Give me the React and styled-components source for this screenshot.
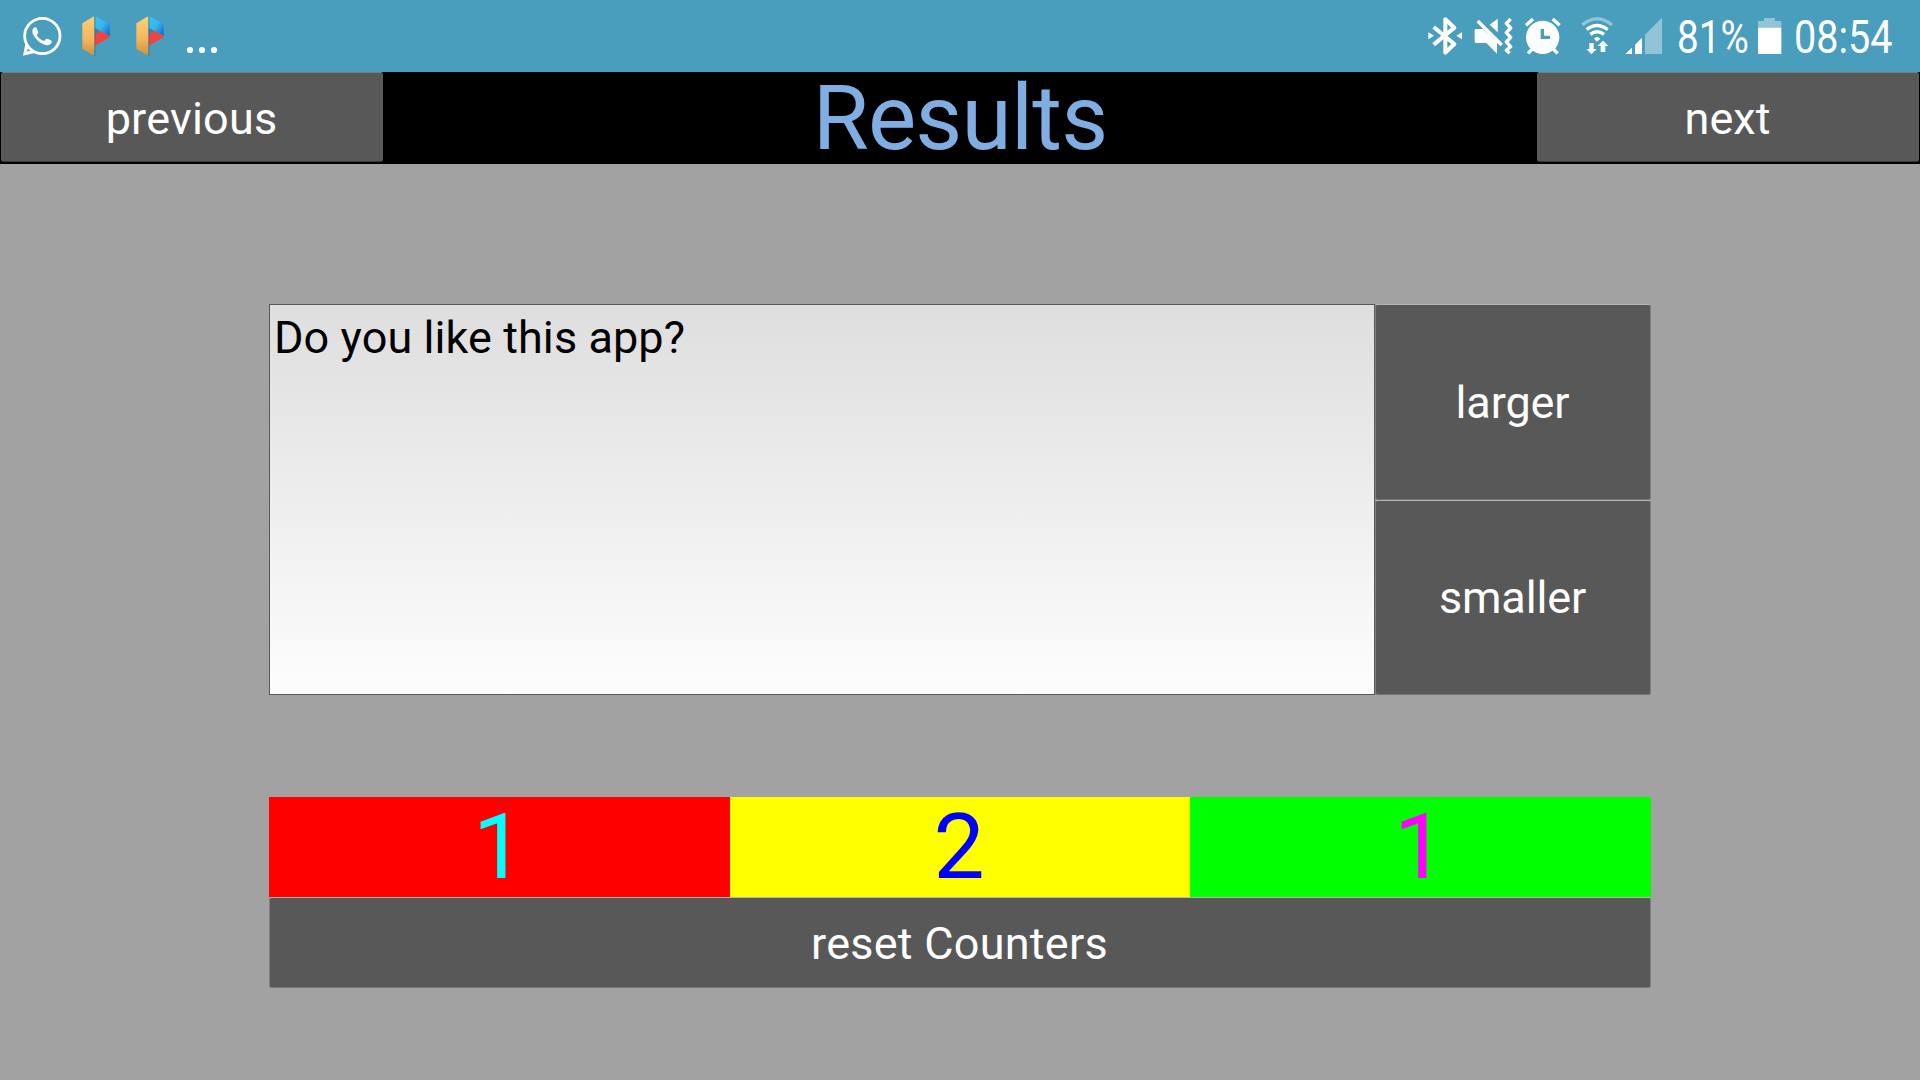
import React from "react";
import styled, { createGlobalStyle } from "styled-components";

const GlobalStyle = createGlobalStyle`
  * { box-sizing: border-box; }
  html, body { margin: 0; padding: 0; }
  body { background: #a2a2a2; font-family: Roboto, "Noto Sans", sans-serif; overflow: hidden; }
`;

const Screen = styled.div`
  width: 1920px;
  height: 1080px;
  display: flex;
  flex-direction: column;
  background: #a2a2a2;
`;

const StatusBar = styled.header`
  height: 72px;
  flex: none;
  display: flex;
  justify-content: space-between;
  padding: 0 24px 0 22px;
  background: #499dbd;
  color: #fff;
`;

const StatusGroup = styled.div`
  display: flex;
  align-items: flex-start;
`;

const Glyph = styled.svg`
  display: block;
  flex: none;
  width: ${(p) => p.$w}px;
  height: 72px;
  fill: #fff;
`;

const StatusText = styled.div`
  width: ${(p) => p.$w}px;
  height: 72px;
  flex: none;
  font-size: 45.5px;
  line-height: 75px;
  white-space: nowrap;
  span {
    display: inline-block;
    transform: scaleX(${(p) => p.$squeeze});
    transform-origin: 0 50%;
  }
`;

const TitleBar = styled.div`
  height: 92px;
  flex: none;
  display: flex;
  justify-content: space-between;
  padding: 0 1px 2px;
  background: #000;
`;

const Title = styled.h1`
  margin: 0;
  font-size: 91px;
  font-weight: 400;
  line-height: 92px;
  letter-spacing: -0.8px;
  color: #80aee3;
`;

const Button = styled.button`
  width: ${(p) => p.$w};
  flex: ${(p) => p.$flex || "none"};
  margin: 0;
  padding: ${(p) => p.$nudge || 0}px 1px 0 0;
  border: 1px solid;
  border-color: ${(p) => p.$edge};
  border-radius: 2px;
  background: #585858;
  background-clip: padding-box;
  color: #fff;
  font: 400 45px Roboto, "Noto Sans", sans-serif;
  letter-spacing: ${(p) => p.$track || 0}px;
  text-align: center;
`;

const Content = styled.main`
  width: 1382px;
  margin: 140px auto 0;
  display: flex;
  flex-direction: column;
`;

const QuestionRow = styled.section`
  height: 391px;
  display: flex;
`;

const Question = styled.div`
  width: 1106px;
  padding: 5px 4px;
  border: 1px solid #585858;
  background: linear-gradient(#dedede, #fdfdfd);
  color: #000;
  font-size: 45px;
  line-height: 55px;
  letter-spacing: 0.08px;
`;

const SizeButtons = styled.div`
  width: 276px;
  display: flex;
  flex-direction: column;
`;

const Counters = styled.section`
  height: 100px;
  margin-top: 102px;
  display: grid;
  grid-template-columns: 461px 460px 461px;
`;

const Counter = styled.div`
  padding-right: 2px;
  background: ${(p) => p.$bg};
  color: ${(p) => p.$fg};
  font-size: 91px;
  line-height: 100px;
  text-align: center;
`;

const ResetRow = styled.div`
  height: 91px;
  display: flex;
`;

const DARK = "#7a7a7a #585858 #3c3c3c #585858";
const LIGHT = "#b4b4b4 #808080 #747474 #808080";

const WhatsApp = () => (
  <Glyph $w={40} viewBox="66 0 120 216">
    <circle cx="127" cy="108" r="53" fill="none" stroke="#fff" strokeWidth="8.5" />
    <path d="M76 132 L69 167 L104 159 L96 150 L80 155 L86 140Z" />
    <path d="M98 88 Q103 79 110 83 L115 97 Q115 101 110 105 Q117 118 132 123 L139 116 Q142 115 155 122 Q156 132 146 135 Q130 138 112 121 Q93 102 98 88Z" />
  </Glyph>
);

const ParallelSpace = ({ id }) => (
  <Glyph $w={28} viewBox="246 0 84 216">
    <defs>
      <linearGradient id={`gold${id}`} x1="0" y1="0" x2="0" y2="1">
        <stop offset="0" stopColor="#ffd078" />
        <stop offset="0.6" stopColor="#f3b55a" />
        <stop offset="1" stopColor="#c98f3c" />
      </linearGradient>
      <linearGradient id={`blue${id}`} x1="0" y1="0" x2="1" y2="1">
        <stop offset="0" stopColor="#35c6f4" />
        <stop offset="0.5" stopColor="#35b5f0" />
        <stop offset="1" stopColor="#0c62cf" />
      </linearGradient>
    </defs>
    <path d="M285 48 L329 72 L329 108 L285 82Z" fill={`url(#blue${id})`} />
    <path d="M300 92 L329 108 L329 112 L283 138 L283 106Z" fill="#f4433f" />
    <path d="M283 84 L299 93 L283 105Z" fill="#3d7f9c" />
    <path d="M281 48 L286 48 L286 168 L281 168Z" fill="#286f91" opacity="0.7" />
    <path d="M247 70 L283 48 L283 168 L247 146Z" fill={`url(#gold${id})`} />
  </Glyph>
);

const Dots = () => (
  <Glyph $w={32} viewBox="558 0 96 216">
    <circle cx="570" cy="150" r="9.3" />
    <circle cx="606" cy="150" r="9.3" />
    <circle cx="642" cy="150" r="9.3" />
  </Glyph>
);

const Bluetooth = () => (
  <Glyph $w={35} viewBox="24 0 105 216">
    <path d="M41 81 L103 132 L76 158 L76 58 L103 83 L41 134" fill="none" stroke="#fff" strokeWidth="12" strokeLinejoin="round" />
    <path d="M25 97 L42 107 L25 118Z M126 97 L109 107 L126 118Z" />
  </Glyph>
);

const Muted = () => (
  <Glyph $w={39} viewBox="163 0 117 216">
    <path d="M210 74 L234 56 V97Z" />
    <path d="M174 63 L246 135" stroke="#499dbd" strokeWidth="19" />
    <path d="M174 63 L246 135" stroke="#fff" strokeWidth="10" />
    <path d="M169 87 H190 L232 126 V161 L200 129 H169 Q165 129 165 125 V91 Q165 87 169 87Z" />
    <path d="M273 57 L260 70 L273 84 L260 98 L273 112 L260 126 L273 140 L260 151 L270 160" fill="none" stroke="#fff" strokeWidth="10" strokeLinejoin="round" />
  </Glyph>
);

const Alarm = () => (
  <Glyph $w={36} viewBox="316 0 108 216">
    <circle cx="369" cy="112" r="50" />
    <path d="M338 147 L325 160 M401 147 L414 160" stroke="#fff" strokeWidth="10" />
    <path d="M319 76 L340 57 M399 57 L420 76" stroke="#fff" strokeWidth="10" />
    <path d="M368 87 V112 H391" fill="none" stroke="#499dbd" strokeWidth="10" />
  </Glyph>
);

const Wifi = () => (
  <Glyph $w={32} viewBox="484 0 96 216">
    <path d="M488 75 Q532 38 577 75" fill="none" stroke="#92c4d7" strokeWidth="10" />
    <path d="M501 89 Q532 64 564 89" fill="none" stroke="#fff" strokeWidth="10" />
    <path d="M512 103 Q532 87 553 103" fill="none" stroke="#fff" strokeWidth="10" />
    <path d="M523 116 Q532 106 542 116 L532 125Z" />
    <path d="M509 129 H522 V147 H531 L515 163 L500 147 H509Z" />
    <path d="M543 156 H557 V138 H566 L550 122 L534 138 H543Z" />
  </Glyph>
);

const Signal = () => (
  <Glyph $w={37} viewBox="615 0 111 216">
    <path d="M616 162 L636 143 V162Z M645 162 V134 L666 113 V162Z" />
    <path d="M675 162 V104 L726 53 V162Z" fill="#92c4d7" />
  </Glyph>
);

const Battery = () => (
  <Glyph $w={24} viewBox="294 0 72 216">
    <path d="M294 83 V63 H312 V54 H345 V63 H364 V83Z" fill="#92c4d7" />
    <path d="M294 83 H364 V162 H294Z" />
  </Glyph>
);

const Space = styled.i`
  flex: none;
  width: ${(p) => p.$w}px;
`;

const counters = [
  { value: 1, bg: "#ff0000", fg: "#00ffff" },
  { value: 2, bg: "#ffff00", fg: "#0000ff" },
  { value: 1, bg: "#00ff00", fg: "#ff00ff" },
];

export default function App() {
  return (
    <Screen>
      <GlobalStyle />
      <StatusBar>
        <StatusGroup>
          <WhatsApp />
          <Space $w={20} />
          <ParallelSpace id="A" />
          <Space $w={26} />
          <ParallelSpace id="B" />
          <Space $w={22} />
          <Dots />
        </StatusGroup>
        <StatusGroup>
          <Bluetooth />
          <Space $w={11.33} />
          <Muted />
          <Space $w={12} />
          <Alarm />
          <Space $w={20} />
          <Wifi />
          <Space $w={11.67} />
          <Signal />
          <Space $w={15} />
          <StatusText $w={81} $squeeze={0.85}><span>81%</span></StatusText>
          <Battery />
          <Space $w={12} />
          <StatusText $w={102} $squeeze={0.87}><span>08:54</span></StatusText>
        </StatusGroup>
      </StatusBar>
      <TitleBar>
        <Button $w="382px" $nudge={2} $track={0.2} $edge={DARK}>previous</Button>
        <Title>Results</Title>
        <Button $w="382px" $nudge={2} $edge={DARK}>next</Button>
      </TitleBar>
      <Content>
        <QuestionRow>
          <Question>Do you like this app?</Question>
          <SizeButtons>
            <Button $w="276px" $flex="0 0 196px" $track={-0.1} $edge={LIGHT}>larger</Button>
            <Button $w="276px" $flex="0 0 195px" $track={-0.15} $edge={LIGHT}>smaller</Button>
          </SizeButtons>
        </QuestionRow>
        <Counters>
          {counters.map((c, i) => (
            <Counter key={i} $bg={c.bg} $fg={c.fg}>{c.value}</Counter>
          ))}
        </Counters>
        <ResetRow>
          <Button $w="1382px" $nudge={2} $track={0.25} $edge={LIGHT}>reset Counters</Button>
        </ResetRow>
      </Content>
    </Screen>
  );
}
